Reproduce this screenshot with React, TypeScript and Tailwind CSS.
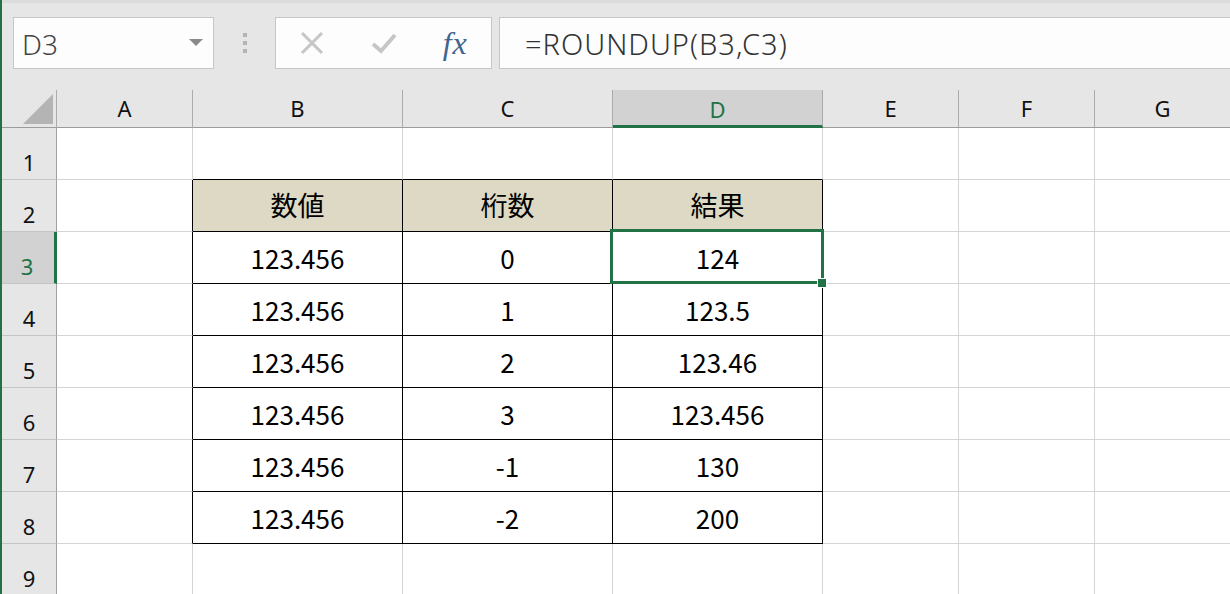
import React from "react";

type Column = { key: string; width: string };

const columns: Column[] = [
  { key: "A", width: "w-[136px]" },
  { key: "B", width: "w-[210px]" },
  { key: "C", width: "w-[210px]" },
  { key: "D", width: "w-[210px]" },
  { key: "E", width: "w-[136px]" },
  { key: "F", width: "w-[136px]" },
  { key: "G", width: "w-[136px]" },
];

// sheet contents, row 1..9, columns A..G
const sheet: string[][] = [
  ["", "", "", "", "", "", ""],
  ["", "数値", "桁数", "結果", "", "", ""],
  ["", "123.456", "0", "124", "", "", ""],
  ["", "123.456", "1", "123.5", "", "", ""],
  ["", "123.456", "2", "123.46", "", "", ""],
  ["", "123.456", "3", "123.456", "", "", ""],
  ["", "123.456", "-1", "130", "", "", ""],
  ["", "123.456", "-2", "200", "", "", ""],
  ["", "", "", "", "", "", ""],
];

const ACTIVE_ROW = 3;
const ACTIVE_COL = 3;

const NameBox = () => (
  <div className="flex h-[52px] w-[201px] items-center justify-between border border-[#c6c6c6] bg-[#fdfdfd] pl-[8px] pr-[10px]">
    <span className="pt-[2px] font-['Noto_Sans',sans-serif] text-[28px] font-light leading-none text-[#444]">D3</span>
    <svg width="14" height="8" viewBox="0 0 14 8">
      <path d="M0 0 L14 0 L7 7 Z" fill="#8a8a8a" />
    </svg>
  </div>
);

const Grip = () => (
  <div className="flex h-[52px] w-[61px] flex-col items-center justify-center gap-[4px]">
    <span className="h-[4px] w-[4px] bg-[#b4b4b4]" />
    <span className="h-[4px] w-[4px] bg-[#b4b4b4]" />
    <span className="h-[4px] w-[4px] bg-[#b4b4b4]" />
  </div>
);

const FormulaButtons = () => (
  <div className="flex h-[52px] w-[217px] items-center border border-[#c6c6c6] bg-[#fdfdfd]">
    <div className="flex w-[72px] justify-center">
      <svg width="24" height="22" viewBox="0 0 24 22">
        <path d="M2 1 L22 21 M22 1 L2 21" stroke="#c6c6c6" strokeWidth="3" fill="none" />
      </svg>
    </div>
    <div className="flex w-[72px] justify-center">
      <svg width="26" height="21" viewBox="0 0 26 21">
        <path d="M2 11 L10 18 L24 2" stroke="#c6c6c6" strokeWidth="4" fill="none" />
      </svg>
    </div>
    <div className="flex w-[72px] justify-center">
      <span className="font-['Liberation_Serif',serif] text-[32px] italic leading-none tracking-[1px] text-[#41648f]">
        fx
      </span>
    </div>
  </div>
);

const FormulaInput = () => (
  <div className="-mr-[20px] flex h-[52px] flex-1 items-center border border-[#c6c6c6] bg-[#fdfdfd] pl-[25px]">
    <span className="font-['Noto_Sans',sans-serif] text-[29px] font-light leading-none tracking-[1px] text-[#333]">
      =ROUNDUP(B3,C3)
    </span>
  </div>
);

const ColumnHeaders = () => (
  <div className="flex h-[38px]">
    <div className="relative h-[38px] w-[55px] shrink-0 border-r border-b border-r-[#ababab] border-b-[#9b9b9b] bg-[#e6e6e6]">
      <svg className="absolute right-[3px] bottom-[3px]" width="30" height="30" viewBox="0 0 30 30">
        <path d="M30 0 L30 30 L0 30 Z" fill="#b4b4b4" />
      </svg>
    </div>
    {columns.map((col, i) =>
      i === ACTIVE_COL ? (
        <div
          key={col.key}
          className={`${col.width} flex h-[38px] shrink-0 items-center justify-center border-r border-b-[3px] border-r-[#ababab] border-b-[#217346] bg-[#d2d2d2] pt-[3px] font-['Noto_Sans',sans-serif] text-[22px] text-[#217346]`}
        >
          {col.key}
        </div>
      ) : (
        <div
          key={col.key}
          className={`${col.width} flex h-[38px] shrink-0 items-center justify-center border-r border-b border-r-[#ababab] border-b-[#9b9b9b] bg-[#e6e6e6] font-['Noto_Sans',sans-serif] text-[22px] text-[#111]`}
        >
          {col.key}
        </div>
      )
    )}
  </div>
);

const RowHeader = ({ n }: { n: number }) =>
  n === ACTIVE_ROW ? (
    <div className="flex h-[52px] w-[55px] shrink-0 items-end justify-center border-r-[3px] border-b border-r-[#217346] border-b-[#c4c4c4] bg-[#d2d2d2] pr-[2px] pb-[6px] font-['Noto_Sans',sans-serif] text-[22px] leading-none text-[#217346]">
      {n}
    </div>
  ) : (
    <div className="flex h-[52px] w-[55px] shrink-0 items-end justify-center border-r border-b border-r-[#a0a0a0] border-b-[#c4c4c4] bg-[#e6e6e6] pb-[6px] font-['Noto_Sans',sans-serif] text-[22px] leading-none text-[#111]">
      {n}
    </div>
  );

const Cell = ({ r, c, value }: { r: number; c: number; value: string }) => {
  const inTable = r >= 2 && r <= 8 && c >= 1 && c <= 3;
  const blackRight = inTable || (c === 0 && r >= 2 && r <= 8);
  const blackBottom = inTable || (r === 1 && c >= 1 && c <= 3);
  const isHead = inTable && r === 2;
  const active = r === ACTIVE_ROW && c === ACTIVE_COL;

  return (
    <div
      className={`${columns[c].width} relative flex h-[52px] shrink-0 items-center justify-center border-r border-b font-['Noto_Sans_CJK_JP',sans-serif] text-black ${
        blackRight ? "border-r-black" : "border-r-[#d4d4d4]"
      } ${blackBottom ? "border-b-black" : "border-b-[#d4d4d4]"} ${isHead ? "bg-[#ddd9c4] text-[27px]" : "bg-white text-[26px]"}`}
    >
      {value}
      {active && (
        <>
          <div className="pointer-events-none absolute -top-[3px] -right-[2px] -bottom-[1px] -left-[3px] z-10 border-[3px] border-[#217346]" />
          <div className="absolute top-[46px] left-[204px] z-20 h-[10px] w-[10px] border border-white bg-[#217346]" />
        </>
      )}
    </div>
  );
};

export default function App() {
  return (
    <div className="h-[594px] w-[1230px] overflow-hidden border-l-2 border-l-[#217346] bg-white">
      <div className="flex h-[90px] items-start border-t-[3px] border-t-[#dcdcdc] bg-[#e6e6e6] pt-[14px] pl-[11px]">
        <NameBox />
        <Grip />
        <FormulaButtons />
        <div className="w-[7px]" />
        <FormulaInput />
      </div>
      <ColumnHeaders />
      {sheet.map((row, ri) => (
        <div key={ri} className="flex">
          <RowHeader n={ri + 1} />
          {row.map((value, ci) => (
            <Cell key={ci} r={ri + 1} c={ci} value={value} />
          ))}
        </div>
      ))}
    </div>
  );
}
